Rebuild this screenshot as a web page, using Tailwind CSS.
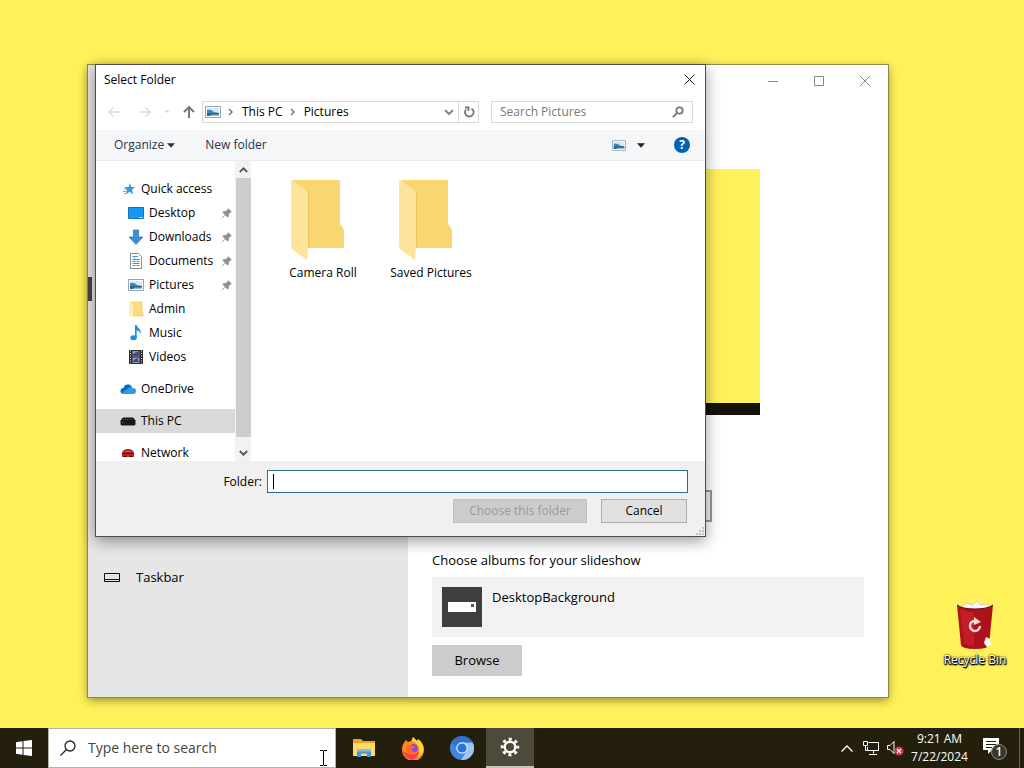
<!DOCTYPE html>
<html lang="en">
<head>
<meta charset="utf-8">
<meta name="viewport" content="width=device-width, initial-scale=1">
<title>Desktop</title>
<script src="https://cdn.jsdelivr.net/npm/@tailwindcss/browser@4"></script>
</head>
<body class="flex min-h-screen flex-col overflow-hidden bg-[#fff159] font-['Open_Sans','Noto_Sans',sans-serif] text-xs text-black">

<svg class="hidden" aria-hidden="true">
  <symbol id="pin" viewBox="0 0 12 12"><path fill="#8c9299" d="M7 1l4 4-1.200.3-2 2 .1 2L6.500 10.500 4.200 8.200 1 11.500.6 11 3.800 7.800 1.500 5.500l1.200-1.400 2 .1 2-2z"/></symbol>
  <symbol id="photo" viewBox="0 0 16 12"><path fill="#fff" stroke="#8fa6b8" d="M.5.5h15v11H.5z"/><path fill="#d3e9f7" d="M2 2h12v5H2z"/><path fill="#3f86b5" d="M2 4q4-1 7 2l5 1v1H2z"/><path fill="#2f647f" d="M2 7h12v3H2z"/><path fill="#8fb9cf" d="M7 8.500h7V10H4z"/></symbol>
  <symbol id="folder" viewBox="0 0 56 82"><path fill="#fae18a" d="M3 1h47v44l4 6v18H3z"/><path fill="#f8d772" d="M3 1h47v44l4 6v18H18V14z"/><path fill="#fce59a" d="M1 1l15 10q2 2 2 5v52l-1 13L3 71q-2-2-2-4z"/><path stroke="#edc65c" stroke-width="1" fill="none" d="M18.500 14v54"/></symbol>
</svg>

<main class="relative flex-1">

  <!-- Settings window -->
  <section aria-label="Settings" class="absolute top-[65px] left-[88px] flex h-[632px] w-[800px] bg-white shadow-[0_0_0_1px_#8f8a4a,0_3px_9px_rgba(0,0,0,0.45)]">
    <nav class="flex w-80 flex-col bg-[#e6e6e6] text-[13px]">
      <div class="mt-[212px] h-6 w-1 bg-[#4c4048]"></div>
      <a href="#taskbar" class="mt-[257px] flex h-10 items-center gap-4 px-4">
        <svg class="size-4" viewBox="0 0 16 16" fill="none" stroke="#111"><path d="M.5 3.500h15v8H.5zM.5 9.500h15"/></svg>
        Taskbar
      </a>
    </nav>
    <div class="flex flex-1 flex-col">
      <div class="flex h-8 justify-end">
        <button aria-label="Minimize" class="grid w-[46px] place-items-center"><svg class="size-[10px]" viewBox="0 0 10 10" stroke="#888"><path d="M0 5.500h10"/></svg></button>
        <button aria-label="Maximize" class="grid w-[46px] place-items-center"><svg class="size-[10px]" viewBox="0 0 10 10" fill="none" stroke="#888"><path d="M.5.5h9v9h-9z"/></svg></button>
        <button aria-label="Close" class="grid w-[46px] place-items-center"><svg class="size-[10px]" viewBox="0 0 10 10" stroke="#888"><path d="M0 0l10 10M10 0L0 10"/></svg></button>
      </div>
      <div class="flex flex-col items-start px-6 text-[13px]">
        <div class="mt-[72px] flex h-[246px] w-[328px] flex-col justify-end bg-[#fff159]"><div class="h-3 bg-[#15120a]"></div></div>
        <select aria-label="Background" class="mt-[75px] h-8 w-[280px] appearance-none border-2 border-[#999] bg-[#f2f2f2] px-2"><option></option></select>
        <h2 class="mt-7 leading-5">Choose albums for your slideshow</h2>
        <div class="mt-[7px] flex w-full gap-[10px] bg-[#f2f2f2] p-[10px]">
          <svg class="size-10" viewBox="0 0 40 40"><path fill="#3e3e3e" d="M0 0h40v40H0z"/><path fill="#fff" d="M6 15h28v10H6z"/><path fill="#555" d="M29 17h3v3h-3z"/></svg>
          <p class="leading-5">DesktopBackground</p>
        </div>
        <button class="mt-2 h-[31px] w-[90px] bg-[#ccc]">Browse</button>
      </div>
    </div>
  </section>

  <!-- Folder picker -->
  <section role="dialog" aria-labelledby="dlg" class="absolute top-16 left-[95px] flex h-[473px] w-[611px] flex-col border border-[#4f4b52] bg-white shadow-[0_4px_14px_rgba(0,0,0,0.4)]">
    <header class="flex h-[29px] items-center justify-between pl-2">
      <h1 id="dlg">Select Folder</h1>
      <button aria-label="Close" class="grid h-7 w-[31px] place-items-center"><svg class="size-[11px]" viewBox="0 0 11 11" stroke="#111"><path d="M.5.5l10 10M10.500.5l-10 10"/></svg></button>
    </header>
    <div class="flex h-9 items-center pr-3 pl-[11px]">
      <button aria-label="Back" class="w-[30px]"><svg class="h-3 w-4" viewBox="0 0 16 12" fill="none" stroke="#dcdcdc" stroke-width="1.500"><path d="M13 6H2M6.500 1.500L2 6l4.500 4.500"/></svg></button>
      <button aria-label="Forward" class="w-[26px]"><svg class="h-3 w-4" viewBox="0 0 16 12" fill="none" stroke="#dcdcdc" stroke-width="1.500"><path d="M2 6h11M8.500 1.500L13 6l-4.500 4.500"/></svg></button>
      <button aria-label="Recent locations" class="w-[19px]"><svg class="h-1 w-2" viewBox="0 0 8 4"><path fill="#ddd" d="M1 0h6L4 3z"/></svg></button>
      <button aria-label="Up" class="w-5"><svg class="h-3 w-[14px]" viewBox="0 0 14 12" fill="none" stroke="#777" stroke-width="2"><path d="M7 12V1.500M2 6l5-5 5 5"/></svg></button>
      <div class="flex h-[22px] w-[277px] items-center border border-[#d9d9d9]">
        <svg class="ml-[2px] h-3 w-4"><use href="#photo"/></svg>
        <svg class="ml-[7px] h-2 w-[5px]" viewBox="0 0 5 8" fill="none" stroke="#777" stroke-width="1.500"><path d="M1 1l3 3-3 3"/></svg>
        <button class="ml-[9px]">This PC</button>
        <svg class="ml-[7px] h-2 w-[5px]" viewBox="0 0 5 8" fill="none" stroke="#777" stroke-width="1.500"><path d="M1 1l3 3-3 3"/></svg>
        <button class="ml-[9px]">Pictures</button>
        <button aria-label="Previous locations" class="mr-1 ml-auto"><svg class="h-[7px] w-[10px]" viewBox="0 0 10 7" fill="none" stroke="#888" stroke-width="2"><path d="M1 1l4 4 4-4"/></svg></button>
        <button aria-label="Refresh" class="grid h-full w-5 place-items-center border-l border-[#d9d9d9]"><svg class="size-3" viewBox="0 0 12 12" fill="none" stroke="#777" stroke-width="1.800"><path d="M8.500 2.500A4.300 4.300 0 1 1 3 3.500M2 1.500h3.500V5"/></svg></button>
      </div>
      <label class="ml-3 flex h-[22px] flex-1 items-center border border-[#d9d9d9] px-2">
        <input type="search" aria-label="Search Pictures" placeholder="Search Pictures" class="min-w-0 flex-1 outline-none placeholder:text-[#777]">
        <svg class="size-3" viewBox="0 0 12 12" fill="none" stroke="#777" stroke-width="1.800"><circle cx="7.500" cy="4.500" r="3.200"/><path d="M5 7L.8 11.200"/></svg>
      </label>
    </div>
    <div class="flex h-[31px] shrink-0 items-center border-b border-[#ececec] bg-[#f5f6f7] pr-[15px] pl-[18px] text-[#263548]">
      <button class="flex items-center gap-[3px]">Organize <svg class="h-[5px] w-2" viewBox="0 0 9 5"><path fill="#263548" d="M0 0h9L4.500 5z"/></svg></button>
      <button class="ml-[30px]">New folder</button>
      <button aria-label="Change view" class="ml-auto"><svg class="h-[11px] w-[14px]"><use href="#photo"/></svg></button>
      <button aria-label="More options" class="ml-[11px]"><svg class="h-[5px] w-2" viewBox="0 0 9 5"><path fill="#222" d="M0 0h9L4.500 5z"/></svg></button>
      <button aria-label="Help" class="ml-[29px] size-4 rounded-full bg-[#0063b1] text-xs leading-4 font-bold text-white">?</button>
    </div>
    <div class="flex min-h-0 flex-1">
      <ul class="w-[139px] overflow-hidden pt-4 leading-6 whitespace-nowrap">
        <li class="flex h-6 items-center gap-1 pl-[25px]"><svg class="size-4" viewBox="0 0 16 16"><path fill="#3399dc" d="M9 2l1.300 4H14l-3 2.700 1 4.500-3.500-2.400L5 13.500l1-4.300L3.500 6H7.500z"/><path stroke="#63b6e8" stroke-width="1.200" d="M3 8h3M2 10.500h4M3 12.500h2"/></svg>Quick access</li>
        <li class="flex h-6 items-center gap-[5px] pr-[2px] pl-8"><svg class="size-4" viewBox="0 0 16 16"><path fill="#1499f2" stroke="#1672b4" d="M.5 2.500h15v11H.5z"/><path stroke="#9fdcff" d="M11 12.500h4"/></svg>Desktop<svg class="ml-auto size-3"><use href="#pin"/></svg></li>
        <li class="flex h-6 items-center gap-[5px] pr-[2px] pl-8"><svg class="size-4" viewBox="0 0 16 16"><path fill="#3b8fd6" stroke="#2873b2" stroke-width=".7" d="M5.500 1h5v7H15l-7 7.500L1 8h4.500z"/></svg>Downloads<svg class="ml-auto size-3"><use href="#pin"/></svg></li>
        <li class="flex h-6 items-center gap-[5px] pr-[2px] pl-8"><svg class="size-4" viewBox="0 0 16 16"><path fill="#fff" stroke="#80909c" d="M2.500.5h8l3 3v12h-11z"/><path stroke="#3c8fc7" fill="none" d="M7 3.500h3M4.500 6.500h7M4.500 8.500h3M8.500 8.500h3M4.500 10.500h7M4.500 12.500h3M8.500 12.500h3M4.500 3.500h2v2"/></svg>Documents<svg class="ml-auto size-3"><use href="#pin"/></svg></li>
        <li class="flex h-6 items-center gap-[5px] pr-[2px] pl-8"><svg class="h-3 w-4"><use href="#photo"/></svg>Pictures<svg class="ml-auto size-3"><use href="#pin"/></svg></li>
        <li class="flex h-6 items-center gap-[5px] pl-8"><svg class="size-4" viewBox="0 0 16 16"><path fill="#fbdc7c" stroke="#eccb66" stroke-width=".7" d="M2 1h12v9l1 1v4H2z"/><path fill="#fff0b5" d="M2 1l3 2v12H2z"/></svg>Admin</li>
        <li class="flex h-6 items-center gap-[5px] pl-8"><svg class="size-4" viewBox="0 0 16 16"><ellipse cx="5.500" cy="12.800" rx="3.200" ry="2.500" fill="#1e8fd8"/><path fill="#1e8fd8" d="M7 0h1.700c.3 3 5 4 4 9-.4-2-2.200-3.500-4-3.800V13H7z"/></svg>Music</li>
        <li class="flex h-6 items-center gap-[5px] pl-8"><svg class="size-4" viewBox="0 0 16 16"><path fill="#2c2c32" d="M1 1h14v14H1z"/><path fill="#8e98c4" d="M4.500 2h7v5.500h-7zM4.500 8.500h7V14h-7z"/><path fill="#494778" d="M5 5l6-3v5H5zM5 12l4-3 2 4H5z"/><path stroke="#ddd" stroke-dasharray="1 1.500" d="M2.500 1.500v13M13.500 1.500v13"/></svg>Videos</li>
        <li class="mt-2 flex h-6 items-center gap-[5px] pl-6"><svg class="size-4" viewBox="0 0 16 16"><path fill="#0f6cbd" d="M3.500 7A4.500 4.500 0 0 1 12 6l-4 7H3.500a3 3 0 0 1 0-6z"/><path fill="#2b9be8" d="M2 12l7-5.500a4 4 0 0 1 4 .5 3 3 0 0 1 0 6H3z"/></svg>OneDrive</li>
        <li class="mt-2 flex h-6 items-center gap-[5px] bg-[#d9d9d9] pl-6"><svg class="size-4" viewBox="0 0 16 16"><path fill="#161616" d="M3 4.500h10l2.500 3V11q0 1.500-2 1.500h-11Q.5 12.500.5 11V7.500z"/><path stroke="#555" stroke-dasharray="1 1" d="M3 6.500h10M2 9.500h4"/></svg>This PC</li>
        <li class="mt-2 flex h-6 items-center gap-[5px] pl-6"><svg class="size-4" viewBox="0 0 16 16"><path fill="#b41f28" d="M2 8q1-4 6-4t6 4v4H2z"/><path stroke="#3c0d10" d="M2 8.500h12M4 11.500h2M10 11.500h2"/><path stroke="#d4545b" d="M5 6.500h6"/></svg>Network</li>
      </ul>
      <div class="flex w-4 flex-col bg-[#f2f2f2]" aria-hidden="true">
        <div class="grid h-[17px] place-items-center"><svg class="h-[6px] w-[9px]" viewBox="0 0 9 6" fill="none" stroke="#555" stroke-width="1.800"><path d="M.8 5l3.700-3.700L8.200 5"/></svg></div>
        <div class="ml-px flex-1 bg-[#cdcdcd]"></div>
        <div class="mt-[7px] grid h-[17px] place-items-center"><svg class="h-[6px] w-[9px]" viewBox="0 0 9 6" fill="none" stroke="#555" stroke-width="1.800"><path d="M.8 1l3.700 3.700L8.200 1"/></svg></div>
      </div>
      <div class="flex flex-1 items-start pt-[18px] pl-[18px]">
        <button class="flex w-[108px] flex-col items-center"><svg class="mr-[10px] h-[82px] w-14"><use href="#folder"/></svg><span class="mt-1">Camera Roll</span></button>
        <button class="flex w-[108px] flex-col items-center"><svg class="mr-[10px] h-[82px] w-14"><use href="#folder"/></svg><span class="mt-1">Saved Pictures</span></button>
      </div>
    </div>
    <footer class="relative h-[75px] shrink-0 bg-[#f0f0f0] pt-[9px] pr-[17px]">
      <div class="flex items-center justify-end gap-[5px]">
        <label for="folder-name">Folder:</label>
        <div class="relative">
          <input id="folder-name" type="text" class="h-[23px] w-[421px] border border-[#2f6a92] bg-white px-1 caret-transparent outline-none">
          <div class="absolute top-1 left-[6px] h-[15px] w-px bg-black"></div>
        </div>
      </div>
      <div class="mt-[6px] mr-px flex justify-end gap-[14px]">
        <button disabled class="h-6 w-[134px] border border-[#c2c2c2] bg-[#ccc] text-[#999]">Choose this folder</button>
        <button class="h-6 w-[86px] border border-[#adadad] bg-[#e1e1e1]">Cancel</button>
      </div>
      <svg class="absolute right-px bottom-px size-[10px]" viewBox="0 0 10 10" fill="#c4c4c4"><path d="M8 8h2v2H8zM5 8h2v2H5zM2 8h2v2H2zM8 5h2v2H8zM5 5h2v2H5zM8 2h2v2H8z"/></svg>
    </footer>
  </section>

  <!-- Desktop shortcut -->
  <a href="#recycle-bin" class="absolute top-[600px] right-[11px] flex w-[76px] flex-col items-center text-white">
    <svg class="h-[50px] w-10" viewBox="0 0 40 50">
      <path fill="#f4f4f4" stroke="#bbb" stroke-width=".6" d="M6 7l6-4 5 2 5-4 4 4 6-1 3 5-4 3H8z"/>
      <path fill="#ab1219" d="M2 5q5 4 18 4t18-4l-4 40q-1 4-14 4T6 45z"/>
      <path fill="#d72a31" d="M5 9q8 3 14 3v34q-6 0-10-2z" opacity=".5"/>
      <path fill="none" stroke="#6d090d" d="M2 5q5 4 18 4t18-4"/>
      <path fill="none" stroke="#f7d7d2" stroke-width="2.500" d="M25 26a5 5 0 1 1-4-5"/><path fill="#f7d7d2" d="M19 17l7 5-7 3z"/>
      <path fill="#fff" d="M31 37l4 2 1 6-4 2-3-4z"/>
    </svg>
    <span class="mt-[2px] leading-4 whitespace-nowrap [text-shadow:0_0_2px_#000,1px_1px_1px_#000,0_1px_2px_#000,0_1px_1px_#000]">Recycle Bin</span>
  </a>
</main>

<!-- Taskbar -->
<footer class="relative flex h-10 items-stretch bg-[#231f0c] text-white">
  <button aria-label="Start" class="grid w-12 place-items-center"><svg class="size-4" viewBox="0 0 16 16" fill="#fff"><path d="M0 2.200l6.500-.9v6.200H0zM7.500 1.100L16 0v7.500H7.500zM0 8.500h6.500v6.200L0 13.800zM7.500 8.500H16V16l-8.500-1.100z"/></svg></button>
  <label class="flex w-[288px] items-center gap-3 border border-[#b5b2a4] bg-white pl-[11px]">
    <svg class="size-4" viewBox="0 0 16 16" fill="none" stroke="#222" stroke-width="1.300"><circle cx="10" cy="6" r="5"/><path d="M6.500 9.500L.5 15.500"/></svg>
    <input type="search" aria-label="Type here to search" placeholder="Type here to search" class="min-w-0 flex-1 text-sm outline-none placeholder:text-[#444]">
  </label>
  <svg class="absolute top-[21px] left-[319px] h-[18px] w-[9px]" viewBox="0 0 9 18" fill="none" stroke="#000"><path d="M1 1.500h3l.5 1 .5-1h3M4.500 2v14M1 16.500h3l.5-1 .5 1h3"/></svg>
  <button aria-label="File Explorer" class="ml-[3px] grid w-[49px] place-items-center"><svg class="h-5 w-[22px]" viewBox="0 0 22 20"><path fill="#e8a62c" d="M0 1h8l2 2h12v4H0z"/><path fill="#ffd968" d="M0 5h22v13H0z"/><path fill="#4795cd" d="M4 11.500h14V19h-4v-3.500H8V19H4z"/><path fill="#80c4ea" d="M4 11.500h14v2H4z"/></svg></button>
  <button aria-label="Firefox" class="grid w-[49px] place-items-center"><svg class="size-6" viewBox="0 0 24 24"><path fill="#ff8a1c" d="M5 4l2 2 3-1 2-4 4 4q1-1 1-2 6 4 6 11a11 11 0 0 1-22 0q0-6 4-10z"/><path fill="#ffd33a" d="M12 1l4 4q1-1 1-2 6 5 5.500 11-1.500 6-6.500 7 4-6 1-11-2-4-6-5z"/><path fill="#ff3c50" d="M1 13q1 3 5 4 5 3 10 0 2-1 2 0-2 6-7 7Q3 23 1 13z"/><circle cx="12.500" cy="12.500" r="4.500" fill="#8b4be0"/><path fill="#ff6a2a" d="M5 9q4-1 6 1 2 0 3 1-1 2-4 2 1 3 5 3-4 3-8 0-3-3-2-7z"/></svg></button>
  <button aria-label="Chromium" class="grid w-[49px] place-items-center"><svg class="size-6" viewBox="0 0 24 24"><circle cx="12" cy="12" r="12" fill="#4285df"/><path fill="#9dc4f8" d="M12 6.500h10.700A12 12 0 0 1 11 24l6-9.500z"/><path fill="#2661bd" d="M1.600 6A12 12 0 0 1 22.700 6.500H12a5.500 5.500 0 0 0-5.500 5.500z" opacity=".55"/><circle cx="12" cy="12" r="5.800" fill="#e4effe"/><circle cx="12" cy="12" r="4.600" fill="#2f72dc"/></svg></button>
  <button aria-label="Settings" class="grid w-12 place-items-center border-b-2 border-[#c6c3b5] bg-[#4d493b]"><svg class="size-5" viewBox="0 0 20 20" fill="none" stroke="#fff"><circle cx="10" cy="10" r="5.300" stroke-width="2.400"/><circle cx="10" cy="10" r="7.800" stroke-width="3" stroke-dasharray="3 3.126" stroke-dashoffset="1.500"/></svg></button>
  <div class="ml-auto flex items-center">
    <button aria-label="Show hidden icons"><svg class="h-[7px] w-3" viewBox="0 0 12 7" fill="none" stroke="#fff" stroke-width="1.300"><path d="M.5 6.500L6 1l5.500 5.500"/></svg></button>
    <button aria-label="Network" class="ml-[10px]"><svg class="h-4 w-[17px]" viewBox="0 0 17 16" fill="none" stroke="#fff"><path d="M5.500 2.500h10v8h-11V7M10.500 10.500v3M6 14.500h8M.5 1.500h4v4h-4zM2.500 5.500v5h2"/></svg></button>
    <button aria-label="Volume muted" class="ml-[7px]"><svg class="h-4 w-[17px]" viewBox="0 0 17 16"><path fill="none" stroke="#fff" d="M.5 5.500h2.500l4-4v12l-4-4H.5z"/><circle cx="12" cy="11" r="4.500" fill="#d62f3d"/><path stroke="#fff" stroke-width="1.300" d="M10 9l4 4M14 9l-4 4"/></svg></button>
    <div class="ml-[6px] w-[59px] text-center leading-[18px] whitespace-nowrap"><p>9:21 AM</p><p>7/22/2024</p></div>
    <button aria-label="1 notification" class="ml-[14px]"><svg class="h-6 w-6" viewBox="0 0 24 24"><path fill="#fff" d="M0 2h16v12H9l-4 4v-4H0z"/><path stroke="#231f0c" d="M3 5.500h10M3 8.500h10M3 11.500h6"/><circle cx="16" cy="16" r="7.500" fill="#39362a" stroke="#8c897f"/><text x="16" y="20" fill="#fff" font-size="12" font-weight="600" text-anchor="middle">1</text></svg></button>
    <div class="ml-3 h-10 w-[5px] border-l border-[#69664f]"></div>
  </div>
</footer>
</body>
</html>
